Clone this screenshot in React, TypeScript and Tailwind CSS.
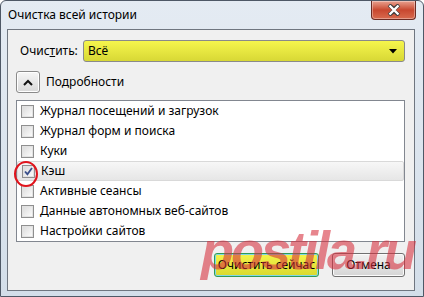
const ITEMS = [
  "Журнал посещений и загрузок",
  "Журнал форм и поиска",
  "Куки",
  "Кэш",
  "Активные сеансы",
  "Данные автономных веб-сайтов",
  "Настройки сайтов",
];

const FONT = "font-['Noto_Sans','Open_Sans',sans-serif]";

function Checkbox({ checked }: { checked: boolean }) {
  return (
    <span className="flex h-[13px] w-[13px] shrink-0 items-center justify-center border border-[#8f8f8f] bg-white">
      <span className="flex h-[11px] w-[11px] items-center justify-center border border-[#e2e2e2] bg-gradient-to-br from-[#dcdcdc] to-[#fbfbfb]">
        {checked && (
          <svg width="9" height="9" viewBox="0 0 9 9">
            <path d="M1 4.5 L3.4 7.2 L8 1" fill="none" stroke="#3a4f8a" strokeWidth="1.8" />
          </svg>
        )}
      </span>
    </span>
  );
}

export default function App() {
  return (
    <div
      className={`relative flex h-[297px] w-[424px] flex-col overflow-hidden rounded-t-[6px] border border-[#4e5866] bg-gradient-to-b from-[#e4ebf3] to-[#d3dee9] text-[12px] text-black ${FONT}`}
    >
      {/* title bar */}
      <div className="flex h-[28px] shrink-0 items-start justify-between pl-[7px] pr-[7px]">
        <span className="mt-[5px] text-[12px] text-black">Очистка всей истории</span>
        <button className="flex h-[19px] w-[45px] items-center justify-center rounded-b-[4px] border border-t-0 border-[#6b2b23] bg-gradient-to-b from-[#e8a08f] via-[#c8472f] to-[#d86a4e] shadow-[inset_0_0_0_1px_rgba(255,255,255,0.35)]">
          <svg width="14" height="12" viewBox="0 0 14 12">
            <path
              d="M2 1 L7 5 L12 1 M2 11 L7 7 L12 11 M7 5 L7 7"
              fill="none"
              stroke="#3b3b3b"
              strokeWidth="4"
            />
            <path
              d="M2.5 1.5 L11.5 10.5 M11.5 1.5 L2.5 10.5"
              fill="none"
              stroke="#ffffff"
              strokeWidth="2.4"
            />
          </svg>
        </button>
      </div>

      {/* client area */}
      <div className="ml-[6px] mr-[8px] flex h-[262px] flex-col border border-[#6f7680] bg-[#f0f0f0] pb-[13px] pl-[8px] pr-[9px] pt-[10px]">
        <div className="flex items-center">
          <span className="w-[67px] pl-[4px]">
            Очис<span className="underline">т</span>ить:
          </span>
          <div className="flex h-[22px] flex-1 items-center justify-between rounded-[3px] border border-[#8a8a8a] bg-gradient-to-b from-[#f6f64c] to-[#d8d835] pl-[4px] pr-[7px]">
            <span>Всё</span>
            <svg width="8" height="5" viewBox="0 0 8 5">
              <path d="M0 0 H8 L4 4.5 Z" fill="#000" />
            </svg>
          </div>
        </div>

        <div className="mt-[9px] flex items-center">
          <span className="flex h-[22px] w-[24px] items-center justify-center rounded-[3px] border border-[#8a8a8a] bg-gradient-to-b from-[#f6f6f6] to-[#d8d8d8] shadow-[inset_0_0_0_1px_#fff]">
            <svg width="10" height="7" viewBox="0 0 10 7">
              <path d="M1 6 L5 2 L9 6" fill="none" stroke="#111" strokeWidth="2" />
            </svg>
          </span>
          <span className="ml-[6px]">Подробности</span>
        </div>

        <div className="mt-[7px] flex flex-col border border-[#828790] bg-white">
          {ITEMS.map((item) => {
            const active = item === "Кэш";
            return (
              <div
                key={item}
                className={`flex h-[20px] items-center gap-[6px] pl-[4px] ${
                  active
                    ? "rounded-[2px] border border-[#d9d9d9] bg-gradient-to-b from-[#f7f7f7] to-[#e6e6e6] pl-[3px]"
                    : ""
                }`}
              >
                <Checkbox checked={active} />
                <span>{item}</span>
              </div>
            );
          })}
        </div>

        <div className="mt-auto flex justify-end gap-[13px]">
          <button className="flex h-[24px] w-[105px] items-center justify-center rounded-[3px] border border-[#2f9a56] bg-gradient-to-b from-[#f4f44a] to-[#d9d92f] shadow-[inset_0_0_0_1px_#7fd7e8]">
            Очистить сейчас
          </button>
          <button className="flex h-[24px] w-[73px] items-center justify-center rounded-[3px] border border-[#707070] bg-gradient-to-b from-[#f2f2f2] to-[#d5d5d5] shadow-[inset_0_0_0_1px_#fbfbfb]">
            Отмена
          </button>
        </div>
      </div>

      {/* annotation circle */}
      <svg className="pointer-events-none absolute left-[11px] top-[158px]" width="30" height="30" viewBox="0 0 30 30">
        <ellipse cx="14" cy="15" rx="11" ry="12" fill="none" stroke="#e0141c" strokeWidth="2" />
      </svg>

      {/* watermark */}
      <span className="pointer-events-none absolute left-[200px] top-[222px] font-['Liberation_Sans',sans-serif] text-[54px] font-bold italic leading-none tracking-[-3px] text-[rgba(214,44,58,0.58)]">
        postila.ru
      </span>
    </div>
  );
}
